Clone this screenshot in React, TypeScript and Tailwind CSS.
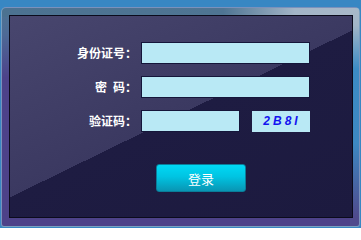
import React from "react"

const cjk = "font-['Noto_Sans_CJK_SC','Noto_Sans',sans-serif]"

function Field({ label, wide = true }: { label: React.ReactNode; wide?: boolean }) {
  return (
    <div className="flex h-[22px] items-center">
      <div className={`w-[127px] text-right text-[12px] font-bold leading-none text-white ${cjk}`}>
        {label}
      </div>
      <input
        className={`ml-[4px] h-[22px] border border-[#15163a] bg-[#b9e9f5] outline-none ${
          wide ? "w-[169px]" : "w-[99px]"
        }`}
      />
    </div>
  )
}

export default function App() {
  return (
    <div className="h-[228px] w-[361px] overflow-hidden bg-[#3887c3] pt-[7px] pl-[1px]">
      <div className="h-[220px] w-[359px] rounded-t-[5px] rounded-b-[3px] border border-[#8db3d2]/70 pt-[7px] pr-[6px] pb-[8px] pl-[7px] [background:linear-gradient(to_bottom,#a9b9c9_0%,#a2b5c7_8%,#3c8bc4_28%,#3d88c2_62%,#4f4a8c_96%)_right_top/9px_100%_no-repeat,linear-gradient(to_right,#4c7291_0%,#4f7593_62%,#a3b5c7_82%,#a9b9c9_100%)_left_top/100%_9px_no-repeat,linear-gradient(to_bottom,#4f7594_0%,#4e6a96_12%,#4d428a_32%,#4d4289_100%)]">
        <div className="h-[203px] w-[344px] border border-[#0b0b1c] bg-[linear-gradient(154deg,#48466e_0%,#3b3961_49.3%,#1e1c42_49.3%,#1c1a3f_100%)] pt-[26px]">
          <div className="flex flex-col gap-[12px]">
            <Field label="身份证号：" />
            <Field
              label={
                <>
                  <span className="mr-[6px]">密</span>码：
                </>
              }
            />
            <div className="flex items-center">
              <Field label="验证码：" wide={false} />
              <div className="ml-[12px] flex h-[21px] w-[58px] items-center justify-center bg-[#b9e9f5] pl-[2px] font-['Liberation_Sans',Arial,sans-serif] text-[12px] font-bold italic leading-none tracking-[3px] text-[#1414f0]">
                2B8I
              </div>
            </div>
          </div>
          <button
            className={`mt-[32px] ml-[146px] flex h-[28px] w-[90px] items-center justify-center rounded-[3px] border border-[#0a7d99] bg-[linear-gradient(to_bottom,#00d9f5_0%,#00c4e2_45%,#0995b3_100%)] text-[13px] leading-none text-white ${cjk}`}
          >
            登录
          </button>
        </div>
      </div>
    </div>
  )
}
